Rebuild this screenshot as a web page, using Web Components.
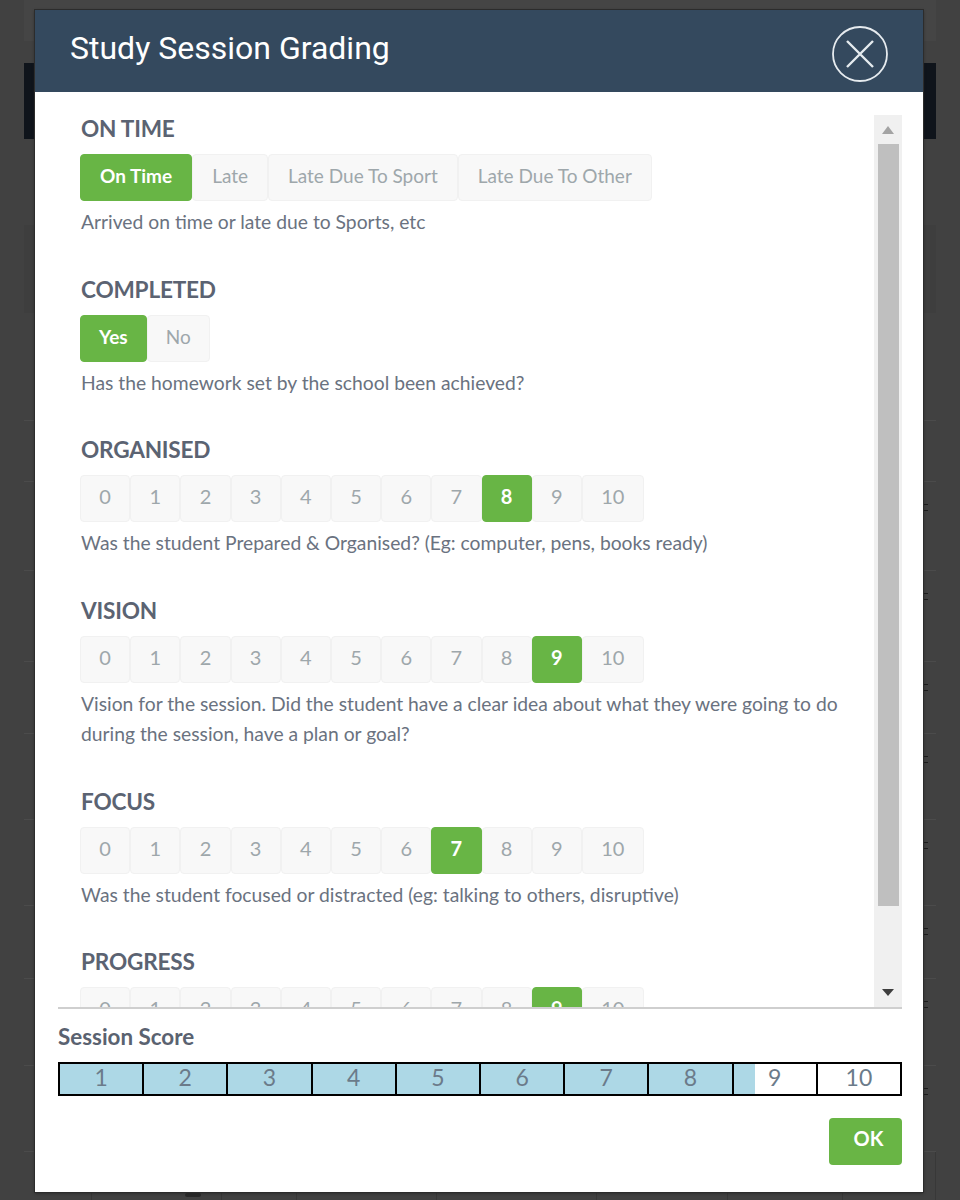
<!DOCTYPE html>
<html>
<head>
<meta charset="utf-8">
<style>
  html, body { margin: 0; height: 1200px; overflow: hidden; background: #414141; }
  body { font-family: Lato, "Noto Sans", sans-serif; }
</style>
</head>
<body>
<page-backdrop>
  <grading-modal heading="Study Session Grading" score="8.25">
    <grade-section title="ON TIME" options="On Time|Late|Late Due To Sport|Late Due To Other" selected="On Time">Arrived on time or late due to Sports, etc</grade-section>
    <grade-section title="COMPLETED" options="Yes|No" selected="Yes" pad="18">Has the homework set by the school been achieved?</grade-section>
    <grade-section title="ORGANISED" selected="8">Was the student Prepared &amp; Organised? (Eg: computer, pens, books ready)</grade-section>
    <grade-section title="VISION" selected="9">Vision for the session. Did the student have a clear idea about what they were going to do during the session, have a plan or goal?</grade-section>
    <grade-section title="FOCUS" selected="7">Was the student focused or distracted (eg: talking to others, disruptive)</grade-section>
    <grade-section title="PROGRESS" selected="9"></grade-section>
  </grading-modal>
</page-backdrop>

<script>
class PageBackdrop extends HTMLElement {
  constructor() {
    super();
    this.attachShadow({mode: 'open'});
    // row heights of the dimmed table behind the dialog
    const heights = [61, 89, 91, 72, 86, 86, 73, 87, 86];
    const rows = heights.map((h, i) =>
      `<div class="row" style="height:${h}px">${i ? '<i></i>' : ''}</div>`).join('');
    const cols = [68, 130, 75, 140, 160, 131, 115, 93].map(w => `<b style="width:${w}px"></b>`).join('');
    this.shadowRoot.innerHTML = `
    <style>
      :host { display: block; position: relative; width: 960px; height: 1200px; overflow: hidden; background: #414141; }
      #page { padding: 0 24px; }
      #top { height: 41px; background: #454545; margin-bottom: 22px; }
      #bar { height: 76px; background: #0f141b; margin-bottom: 86px; }
      #box { height: 88px; background: #3e3e3e; margin-bottom: 107px; }
      .row { box-sizing: border-box; border-top: 1px solid #4b4b4b; display: flex; justify-content: flex-end; padding-top: 22px; }
      /* bits of table text that stick out beside the dialog */
      .row i { width: 4px; height: 5px; margin-right: 8px; border-top: 1px solid #1c1c1c; border-bottom: 1px solid #1c1c1c; }
      #cols { display: flex; height: 60px; border-top: 1px solid #4b4b4b; }
      #cols b { box-sizing: border-box; border-right: 1px solid #383838; }
      #blob { position: absolute; left: 185px; top: 1193px; width: 16px; height: 4px; background: #2a2a2a; border-radius: 2px; }
      #modal { position: absolute; left: 35px; top: 10px; width: 888px; }
    </style>
    <div id="page">
      <div id="top"></div>
      <div id="bar"></div>
      <div id="box"></div>
      ${rows}
      <div id="cols">${cols}</div>
    </div>
    <div id="blob"></div>
    <div id="modal"><slot></slot></div>
    `;
  }
}

class GradingModal extends HTMLElement {
  constructor() {
    super();
    this.attachShadow({mode: 'open'});
    const score = parseFloat(this.getAttribute('score'));
    const cells = [1,2,3,4,5,6,7,8,9,10].map(n => `<span>${n}</span>`).join('');
    this.shadowRoot.innerHTML = `
    <style>
      :host { display: flex; flex-direction: column; height: 1182px; background: #fff; box-shadow: 0 0 0 1px #2c2c2c, 0 1px 3px #222; }
      header { height: 82px; flex: none; box-sizing: border-box; padding: 0 35px; background: #34495e;
        display: flex; align-items: center; justify-content: space-between; }
      h1 { margin: 0 0 6px; font: 400 32px Roboto, sans-serif; color: #fff; }
      header svg { display: block; margin-top: 5px; }
      #wrap { margin: 23px 21px 0 23px; height: 894px; flex: none; display: flex;
        border-bottom: 2px solid #cfcfcf; box-sizing: border-box; }
      #scroll { flex: 1; overflow: hidden; padding-left: 22px; }
      #bar { width: 28px; flex: none; background: #f0f0f0; display: flex; flex-direction: column; align-items: center; }
      #thumb { width: 21px; height: 762px; background: #bfbfbf; }
      .arrow { height: 29px; flex: none; display: flex; align-items: center; justify-content: center; }
      footer { margin: 0 21px 0 23px; }
      h2 { margin: 14px 0 12px; font: 700 22.4px Lato, sans-serif; color: #5a6270; }
      #score { display: grid; grid-template-columns: repeat(10, 1fr); height: 34px; box-sizing: border-box;
        border: 2px solid #000; border-right: 0;
        background: linear-gradient(90deg, #add8e6 ${(score * 10).toFixed(2)}%, #fff 0); }
      #score span { border-right: 2px solid #000; text-align: center; font: 400 23px/26px Lato, sans-serif; color: #6b7b8a; }
      #actions { display: flex; justify-content: flex-end; margin-top: 22px; }
      button { width: 73px; height: 47px; border: 0; border-radius: 4px; background: #69b545; color: #fff;
        font: 700 20px Lato, sans-serif; padding: 0 0 7px 6px; }
    </style>
    <header>
      <h1>${this.getAttribute('heading')}</h1>
      <svg width="56" height="56" viewBox="0 0 56 56" fill="none" stroke="#e6ebef">
        <circle cx="28" cy="28" r="27" stroke-width="1.8"/>
        <path d="M15 15 L41 41 M41 15 L15 41" stroke-width="2.4"/>
      </svg>
    </header>
    <div id="wrap">
      <div id="scroll"><slot></slot></div>
      <div id="bar">
        <div class="arrow"><svg width="12" height="8"><path d="M6 0 L12 8 H0 Z" fill="#a3a3a3"/></svg></div>
        <div id="thumb"></div>
        <div style="flex:1"></div>
        <div class="arrow" style="height:30px"><svg width="12" height="7"><path d="M0 0 H12 L6 7 Z" fill="#3e3e3e"/></svg></div>
      </div>
    </div>
    <footer>
      <h2>Session Score</h2>
      <div id="score">${cells}</div>
      <div id="actions"><button>OK</button></div>
    </footer>
    `;
  }
}

class GradeSection extends HTMLElement {
  constructor() {
    super();
    this.attachShadow({mode: 'open'});
    const opts = this.hasAttribute('options')
      ? this.getAttribute('options').split('|')
      : ['0','1','2','3','4','5','6','7','8','9','10'];
    const selected = this.getAttribute('selected');
    const numeric = !this.hasAttribute('options');
    const pad = this.getAttribute('pad') || 19;
    const btns = opts.map(o => `<a class="${o === selected ? 'on' : ''} ${numeric ? 'num' : ''}">${o}</a>`).join('');
    this.shadowRoot.innerHTML = `
    <style>
      :host { display: block; padding-bottom: 38.7px; }
      h3 { margin: 0; padding: 0 0 0 1px; font: 700 22.6px/27px Lato, sans-serif; color: #5b6372; letter-spacing: -.2px; }
      #group { display: flex; margin-top: 12px; height: 47px; }
      a { box-sizing: border-box; padding: 0 ${pad}px 3px; border: 1px solid #f1f1f1; border-radius: 4px; background: #f8f8f8;
        color: #9ea7ab; font: 400 19px/41px Lato, sans-serif; white-space: nowrap; }
      a.num { width: 50.2px; padding: 0 0 3px; text-align: center; font-size: 20px; line-height: 40px; }
      a:last-child.num { width: 62px; }
      a.on { background: #68b545; border-color: #68b545; color: #fff; font-weight: 700; }
      p { margin: 6px 0 0 1px; font: 400 19.3px/30px Lato, sans-serif; color: #6a7280; }
    </style>
    <h3>${this.getAttribute('title')}</h3>
    <div id="group">${btns}</div>
    <p><slot></slot></p>
    `;
  }
}

customElements.define('page-backdrop', PageBackdrop);
customElements.define('grading-modal', GradingModal);
customElements.define('grade-section', GradeSection);
</script>
</body>
</html>
